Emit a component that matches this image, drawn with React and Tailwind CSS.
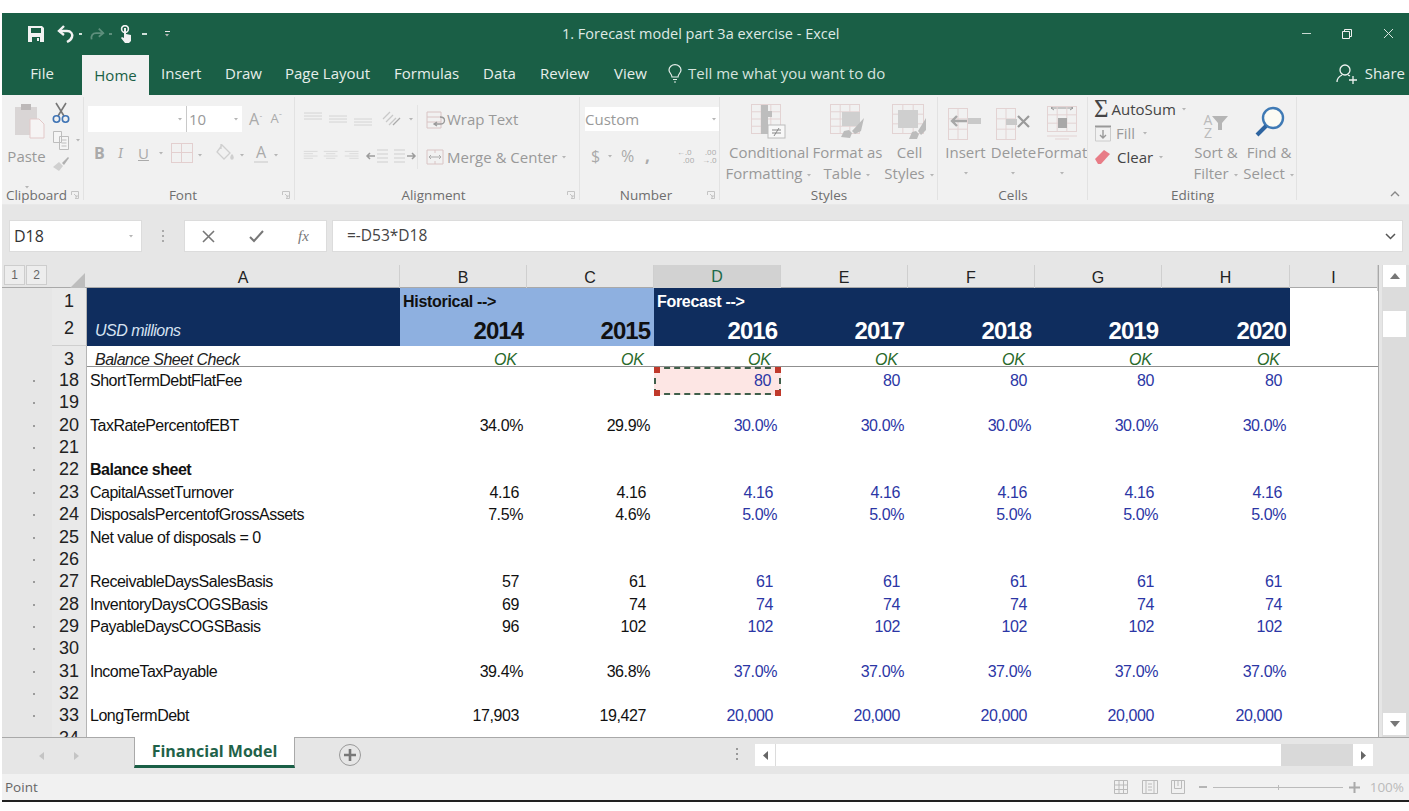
const Caret = ({ className = '' }) => (
  <svg width="6" height="4" viewBox="0 0 6 4" className={`inline-block ${className}`}><path d="M1 1h4L3 3.5z" fill="#b5b5b5" /></svg>
);

const Launcher = () => (
  <svg width="8" height="8" viewBox="0 0 8 8" fill="none" stroke="#c4c4c4"><path d="M.5 4V.5H7.5V7.5H4M3 3l3 3M6 4v2H4" /></svg>
);

const Save = () => (
  <svg width="20" height="20" viewBox="0 0 20 20"><path fill="#f2f2f2" d="M2 2h14l2 2v14H2z" /><path fill="#1a5f46" d="M5 4h10v5H5zM6 13h8v5H6z" /><path fill="#f2f2f2" d="M11 14h2v3h-2z" /></svg>
);

const Undo = () => (
  <svg width="20" height="20" viewBox="0 0 20 20" fill="none" stroke="#f2f2f2" strokeWidth="2.4"><path d="M8 2 3 7l5 4" /><path d="M3 7h8c4 0 6 3 5 6s-3 4-5 5" /></svg>
);

const Redo = () => (
  <svg width="18" height="18" viewBox="0 0 20 20" fill="none" stroke="#5d8f7c" strokeWidth="2"><path d="m12 4 5 5-5 4" /><path d="M17 9H9c-4 0-6 3-5 7" /></svg>
);

const Touch = () => (
  <svg width="14" height="18" viewBox="0 0 14 18"><circle cx="6" cy="4" r="3.4" fill="none" stroke="#f2f2f2" strokeWidth="1.6" /><path fill="#f2f2f2" d="M5 3h2v6l5 1v6l-2 2H6l-4-5 1-1 2 1z" /></svg>
);

const Paste = () => (
  <svg width="34" height="36" viewBox="0 0 34 36"><path fill="#d9d5d5" d="M1 4h22v28H1z" /><path fill="#bdb9b9" d="M7 1h10v6H7z" /><path fill="#f6f4f4" stroke="#e3c9c9" d="M16 16h9l5 5v14H16z" /></svg>
);

const Scissors = () => (
  <svg width="18" height="22" viewBox="0 0 18 22" fill="none"><path stroke="#777" strokeWidth="1.6" d="m4 1 8 13M14 1 6 14" /><circle cx="4.5" cy="17" r="3.2" stroke="#3f74b5" strokeWidth="1.6" /><circle cx="13.5" cy="17" r="3.2" stroke="#3f74b5" strokeWidth="1.6" /></svg>
);

const Copy = () => (
  <svg width="18" height="20" viewBox="0 0 18 20" fill="none" stroke="#bdbdbd"><path d="M1.5 1.5h8v11h-8zM7.5 6.5h9v13h-9z" fill="#f5f5f5" /><path d="M9.5 10h5M9.5 13h5M9.5 16h5" /></svg>
);

const Brush = () => (
  <svg width="18" height="16" viewBox="0 0 18 16"><path fill="#d0d0d0" d="M1 11 7 6l4 4-4 5z" /><path fill="#b0b0b0" d="m10 7 6-6 1 1-5 7z" /></svg>
);

const FontColorBar = ({ w = 14 }) => <span className="block h-[2px] bg-[#dcdcdc]" style={{ width: w }} />;

const AlignIcon = ({ mode, top }) => {
  const offs = mode === 'v' ? [top, top + 3, top + 6] : [1, 4, 7, 10];
  return (
    <svg width="20" height="14" viewBox="0 0 20 14" stroke="#d4d4d4" fill="none">
      {offs.map((o, i) => (
        <path key={i} d={mode === 'l' ? `M1 ${o}h${i % 2 ? 12 : 18}` : mode === 'r' ? `M${i % 2 ? 7 : 1} ${o}H19` : mode === 'c' ? `M${i % 2 ? 4 : 1} ${o}H${i % 2 ? 16 : 19}` : `M1 ${o}h18`} />
      ))}
    </svg>
  );
};

const Indent = ({ flip }) => (
  <svg width="24" height="14" viewBox="0 0 24 14" fill="none" stroke="#cfcfcf" style={flip ? { transform: 'scaleX(-1)' } : undefined}>
    <path d="M12 1h11M12 5h11M12 9h11M12 13h11" />
    <path stroke="#9c9c9c" strokeWidth="1.5" d="M10 7H2m3-3L2 7l3 3" />
  </svg>
);

const Orient = () => (
  <svg width="22" height="18" viewBox="0 0 22 18" fill="none" stroke="#c9c9c9" strokeWidth="1.3"><path d="m2 9 7-7M5 12l7-7M8 15l7-7" /><path d="M12 15 19 8" stroke="#aaa" /></svg>
);

const WrapIcon = () => (
  <svg width="22" height="18" viewBox="0 0 22 18" fill="none" stroke="#d9c4c4"><path d="M1 1h14v16H1zM1 6h14M1 11h14" /><path stroke="#999" strokeWidth="1.3" d="M8 13h6c6 0 6-7 0-7m-3 5-3 2 3 2" /></svg>
);

const MergeIcon = () => (
  <svg width="18" height="16" viewBox="0 0 18 16" fill="none" stroke="#d9c4c4"><path d="M1 1h16v14H1zM9 1v3M9 12v3" /><path stroke="#aaa" d="M3 8h12M5 6 3 8l2 2M13 6l2 2-2 2" /></svg>
);

const SheetGrid = ({ w, h, cols, rows, className = '' }) => {
  const items = [];
  for (let i = 0; i <= cols; i++) items.push(<path key={`c${i}`} d={`M${0.5 + (i * (w - 1)) / cols} 0V${h}`} />);
  for (let i = 0; i <= rows; i++) items.push(<path key={`r${i}`} d={`M0 ${0.5 + (i * (h - 1)) / rows}H${w}`} />);
  return <g stroke="#e3d3d3" fill="none" className={className}>{items}</g>;
};

const CondFormat = () => (
  <svg width="36" height="36" viewBox="0 0 36 36"><SheetGrid w={30} h={30} cols={3} rows={4} /><path fill="#bdbdbd" d="M10 1h7v6h4v6h-4v6h-7z" /><path fill="#bdbdbd" d="M10 19h7v11h-7z" /><rect x="17" y="21" width="17" height="13" fill="#f8f8f8" stroke="#bcbcbc" /><path stroke="#888" d="M21 26h9M21 29h9M28 24l-5 8" /></svg>
);

const FormatTable = () => (
  <svg width="36" height="36" viewBox="0 0 36 36"><SheetGrid w={30} h={30} cols={3} rows={4} /><path fill="#cfcfcf" d="M12 8h18v14H12z" /><path fill="#bcbcbc" d="m11 33 3-6 5-1 3 3-2 5zM22 27 34 14l-3 13-6 3z" /></svg>
);

const CellStyles = () => (
  <svg width="36" height="36" viewBox="0 0 36 36"><SheetGrid w={32} h={30} cols={3} rows={3} /><path fill="#cfcfcf" d="M6 6h20v18H6z" /><path fill="#bcbcbc" d="m17 35 3-7 4-1 3 3-2 5zM26 27 34 14v12l-5 5z" /></svg>
);

const CellsIcon = ({ kind }) => {
  if (kind === 'format') {
    return (
      <svg width="30" height="34" viewBox="0 0 30 34" fill="none"><path stroke="#999" d="M4 2h22M4 2l3-2M4 2l3 2M26 2l-3-2M26 2l-3 2" /><SheetGrid w={30} h={26} cols={3} rows={3} /><path fill="#a8a8a8" d="M11 12h9v10h-9z" /><path stroke="#e3d3d3" d="M0 30h30M8 33h14" /></svg>
    );
  }
  return (
    <svg width="36" height="32" viewBox="0 0 36 32" fill="none">
      <SheetGrid w={20} h={32} cols={2} rows={3} />
      {kind === 'insert' ? (
        <><path stroke="#a8a8a8" strokeWidth="2.4" d="M19 13H4m5-5-5 5 5 5" /><path fill="#c9c9c9" d="M20 10h13v6H20z" /></>
      ) : (
        <><path fill="#c9c9c9" d="M10 11h11v6H10z" /><path stroke="#9a9a9a" strokeWidth="2.2" d="m22 8 11 11m0-11L22 19" /></>
      )}
    </svg>
  );
};

const RibbonText = ({ className = '', children }) => <span className={`text-[15px] leading-[21px] whitespace-nowrap text-[#999] ${className}`}>{children}</span>;

const GroupLabel = ({ children, launcher, className = '' }) => (
  <div className={`h-[18px] flex items-center text-[13.5px] text-[#6e6e6e] ${className}`}>
    <span className="flex-1 text-center whitespace-nowrap">{children}</span>
    {launcher && <span className="mr-[5px] flex"><Launcher /></span>}
  </div>
);

const Group = ({ w, label, launcher, labelClass, children }) => (
  <div className="flex flex-col relative" style={{ width: w }}>
    <div className="h-[91px]">{children}</div>
    <GroupLabel launcher={launcher} className={labelClass}>{label}</GroupLabel>
    <span className="absolute right-0 top-[2px] bottom-[4px] w-px bg-[#e2e2e2]" />
  </div>
);

const BigButton = ({ w, icon, lines, caretOnly }) => (
  <div className="flex flex-col items-center" style={{ width: w }}>
    <div className="h-[46px] flex items-end pb-[1px]">{icon}</div>
    <div className="mt-[1px] flex flex-col items-center">
      {lines.map((l, i) => <RibbonText key={i}>{l}</RibbonText>)}
      {caretOnly && <Caret className="mt-[8px]" />}
    </div>
  </div>
);

const TitleBar = () => (
  <div className="h-[41px] flex items-center bg-[#1a5f46] text-[#dfe9e5]">
    <div className="flex items-center w-[200px] pl-[24px]">
      <Save />
      <span className="ml-[10px] flex"><Undo /></span>
      <span className="ml-[3px] w-[3px] h-[2px] bg-[#cfe0d9]" />
      <span className="ml-[6px] flex"><Redo /></span>
      <span className="ml-[3px] w-[3px] h-[2px] bg-[#5d8f7c]" />
      <span className="ml-[7px] flex"><Touch /></span>
      <span className="ml-[9px] w-[5px] h-[2px] bg-[#cfe0d9]" />
      <span className="ml-[17px] flex flex-col items-center gap-[1px]"><span className="w-[5px] h-px bg-[#e8e8e8]" /><Caret /></span>
    </div>
    <div className="ml-[360px] text-[14.5px] whitespace-nowrap">1. Forecast model part 3a exercise - Excel</div>
    <div className="ml-auto flex items-center pr-[15px] gap-[31px]">
      <span className="w-[9px] h-px bg-[#c9d9d2]" />
      <svg width="10" height="10" viewBox="0 0 10 10" fill="none" stroke="#f0f0f0"><path d="M.5 2.5h7v7h-7zM2.5 2.5v-2h7v7h-2" /></svg>
      <svg width="11" height="11" viewBox="0 0 11 11" stroke="#d8e4df"><path d="m1 1 9 9m0-9-9 9" /></svg>
    </div>
  </div>
);

const tabs = [['Insert', 161, 200], ['Draw', 226, 261], ['Page Layout', 287, 371], ['Formulas', 396, 460], ['Data', 485, 517], ['Review', 542, 591], ['View', 616, 649]];

const TabRow = () => (
  <div className="h-[41px] flex bg-[#1a5f46] text-[15px] text-[#e6eeea]">
    <div className="w-[80px] flex items-center justify-center pb-[2px]">File</div>
    <div className="w-[67px] mt-[1px] bg-[#f1f1f1] text-[#1a5f46] flex items-center justify-center">Home</div>
    <div className="ml-[12px] flex items-center gap-[25px] pb-[2px]">
      {tabs.map(([t, a, b]) => <span key={t} className="whitespace-nowrap text-center" style={{ width: b - a }}>{t}</span>)}
    </div>
    <div className="ml-[21px] flex items-center pb-[2px]">
      <svg width="14" height="19" viewBox="0 0 14 19" fill="none" stroke="#e6eeea" strokeWidth="1.2"><path d="M4 13c0-3-3-4-3-7a6 5.4 0 0 1 12 0c0 3-3 4-3 7zM5 15.500h4M6 18h2" /></svg>
      <span className="ml-[6px] whitespace-nowrap text-[#d6e3de]">Tell me what you want to do</span>
    </div>
    <div className="ml-auto flex items-center pb-[2px] pr-[4px]">
      <svg width="22" height="21" viewBox="0 0 22 21" fill="none" stroke="#eef3f1" strokeWidth="1.3"><circle cx="9" cy="7" r="5" /><path d="M1 19c0-4 3-6 5-7M12 12l2 1M13 17h8M17 13v8" /></svg>
      <span className="ml-[7px]">Share</span>
    </div>
  </div>
);

const Ribbon = () => (
  <div className="h-[109px] flex bg-[#f1f1f1]">
    <Group w={82} label="Clipboard" launcher>
      <div className="flex h-full">
        <div className="w-[50px] flex flex-col items-center pt-[8px]">
          <span className="ml-[7px] flex"><Paste /></span>
          <RibbonText className="mt-[7px] mr-[1px]">Paste</RibbonText>
          <span className="mt-[6px]"><Caret /></span>
        </div>
        <div className="flex flex-col items-start pt-[7px] gap-[6px]">
          <Scissors />
          <span className="flex items-center gap-[5px]"><Copy /><Caret /></span>
          <Brush />
        </div>
      </div>
    </Group>
    <Group w={211} label="Font" launcher>
      <div className="pl-[4px] pt-[11px]">
        <div className="flex items-center">
          <div className="w-[98px] h-[26px] bg-white flex items-center justify-end pr-[3px]"><Caret /></div>
          <div className="w-[56px] h-[26px] bg-white border-l border-[#c9c9c9] flex items-center pl-[2px] justify-between pr-[3px]"><RibbonText>10</RibbonText><Caret /></div>
          <span className="ml-[7px] text-[16px] text-[#aaa]">A<sup className="text-[8px]">ˆ</sup></span>
          <span className="ml-[8px] text-[13px] text-[#aaa]">A<sup className="text-[8px]">ˇ</sup></span>
        </div>
        <div className="flex items-center mt-[8px] pl-[6px] h-[26px] text-[#aaa]">
          <b className="text-[16px] w-[24px]">B</b>
          <i className="text-[15px] font-serif w-[20px]">I</i>
          <span className="text-[15px] underline w-[20px]">U</span>
          <Caret />
          <span className="ml-[7px] w-[22px] h-[20px] grid grid-cols-2 grid-rows-2 border border-[#e3cfcf]">
            <span className="border-r border-b border-[#e3cfcf]" /><span className="border-b border-[#e3cfcf]" /><span className="border-r border-[#e3cfcf]" /><span />
          </span>
          <span className="ml-[4px]"><Caret /></span>
          <svg className="ml-[10px]" width="22" height="20" viewBox="0 0 22 20" fill="none" stroke="#cfcfcf" strokeWidth="1.3"><path d="m9 2 8 8-6 6-7-7zM8 1v5" /><path d="M19 12c1.500 2 1.500 4 0 4s-1.500-2 0-4z" fill="#cfcfcf" /></svg>
          <span className="ml-[4px]"><Caret /></span>
          <span className="ml-[9px] text-[16px] flex flex-col items-center leading-[17px]">A<FontColorBar /></span>
          <span className="ml-[5px]"><Caret /></span>
        </div>
      </div>
    </Group>
    <Group w={285} label="Alignment" launcher labelClass="pl-[5px]">
      <div className="flex pt-[11px] h-full">
        <div className="w-[122px] pl-[8px]">
          <div className="flex items-center gap-[5px] h-[26px]">
            <AlignIcon mode="v" top={1} /><AlignIcon mode="v" top={4} /><AlignIcon mode="v" top={7} />
            <span className="ml-[3px] flex"><Orient /></span>
            <Caret />
          </div>
          <div className="flex items-center gap-[5px] h-[26px] mt-[11px]">
            <AlignIcon mode="l" /><AlignIcon mode="c" /><AlignIcon mode="r" />
            <span className="flex gap-[4px] ml-[1px]"><Indent /><Indent flip /></span>
          </div>
        </div>
        <div className="border-l border-[#e4e4e4] h-[64px] pl-[8px] -mt-[1px]">
          <div className="flex items-center h-[27px] mt-[1px]">
            <WrapIcon />
            <RibbonText className="-ml-[1px]">Wrap Text</RibbonText>
          </div>
          <div className="flex items-center h-[26px] mt-[11px]">
            <MergeIcon />
            <RibbonText className="ml-[3px]">Merge &amp; Center</RibbonText>
            <Caret className="ml-[4px]" />
          </div>
        </div>
      </div>
    </Group>
    <Group w={140} label="Number" launcher labelClass="pl-[5px]">
      <div className="pl-[5px] pt-[12px]">
        <div className="w-[134px] h-[24px] bg-white flex items-center justify-between pr-[2px]"><RibbonText>Custom</RibbonText><Caret /></div>
        <div className="flex items-center h-[26px] mt-[12px] text-[#aaa] pl-[6px]">
          <span className="text-[16px] w-[16px]">$</span>
          <Caret />
          <span className="ml-[8px] text-[16px] w-[24px]">%</span>
          <b className="text-[17px] w-[32px]">,</b>
          <span className="flex flex-col text-[8px] leading-[8px] w-[25px]"><span>←.0</span><span className="pl-[6px]">.00</span></span>
          <span className="flex flex-col text-[8px] leading-[8px]"><span className="pl-[3px]">.00</span><span>→.0</span></span>
        </div>
      </div>
    </Group>
    <Group w={218} label="Styles">
      <div className="flex pl-[4px]">
        <BigButton w={90} icon={<CondFormat />} lines={['Conditional', <>Formatting <Caret /></>]} />
        <BigButton w={67} icon={<FormatTable />} lines={['Format as', <>Table <Caret /></>]} />
        <BigButton w={57} icon={<CellStyles />} lines={['Cell', <>Styles <Caret /></>]} />
      </div>
    </Group>
    <Group w={150} label="Cells">
      <div className="flex pl-[3px]">
        <BigButton w={49} icon={<CellsIcon kind="insert" />} lines={['Insert']} caretOnly />
        <BigButton w={47} icon={<CellsIcon kind="delete" />} lines={['Delete']} caretOnly />
        <BigButton w={50} icon={<CellsIcon kind="format" />} lines={['Format']} caretOnly />
      </div>
    </Group>
    <Group w={209} label="Editing">
      <div className="flex">
        <div className="w-[100px] pl-[6px] pt-[2px] flex flex-col">
          <div className="flex items-center h-[24px]">
            <span className="text-[25px] leading-[24px] text-[#444] font-['Liberation_Serif',serif]">Σ</span>
            <span className="ml-[3px] text-[15px] text-[#444]">AutoSum</span>
            <Caret className="ml-[5px]" />
          </div>
          <div className="flex items-center h-[24px]">
            <svg width="18" height="17" viewBox="0 0 18 17" fill="none" stroke="#999"><path d="M1 1.500h16" strokeWidth="2" /><path stroke="#ccc" d="M1.500 3v13h15V3" /><path d="M9 5v8M6 10l3 3 3-3" strokeWidth="1.4" /></svg>
            <RibbonText className="ml-[4px]">Fill</RibbonText>
            <Caret className="ml-[7px]" />
          </div>
          <div className="flex items-center h-[24px]">
            <svg width="18" height="16" viewBox="0 0 18 16"><path fill="#e87c86" d="m1 10 9-9 6 4-9 10H4z" /></svg>
            <span className="ml-[5px] text-[15px] text-[#444]">Clear</span>
            <Caret className="ml-[5px]" />
          </div>
        </div>
        <div className="flex">
          <div className="w-[56px] flex flex-col items-center">
            <div className="h-[46px] flex items-end pb-[2px] text-[#bbb]">
              <span className="flex flex-col text-[14px] leading-[13px] items-center"><span>A</span><span>Z</span></span>
              <svg className="mb-[8px]" width="16" height="16" viewBox="0 0 16 16"><path fill="#b5b5b5" d="M0 1h16l-6 7v7H6V8z" /></svg>
            </div>
            <div className="mt-[1px] flex flex-col items-center">
              <RibbonText>Sort &amp; </RibbonText>
              <RibbonText>Filter <Caret /></RibbonText>
            </div>
          </div>
          <div className="w-[50px] flex flex-col items-center">
            <div className="h-[46px] flex items-end pb-[3px]">
              <svg width="31" height="32" viewBox="0 0 31 32" fill="none"><circle cx="19" cy="12" r="10" fill="#fbfbf4" stroke="#3f7ab5" strokeWidth="2.4" /><path stroke="#2d64a0" strokeWidth="4" d="M12 20 3 29" /></svg>
            </div>
            <div className="mt-[1px] flex flex-col items-center">
              <RibbonText className="text-[#444]">Find &amp;</RibbonText>
              <RibbonText className="text-[#444]">Select <Caret /></RibbonText>
            </div>
          </div>
        </div>
      </div>
    </Group>
    <div className="flex-1 flex justify-end items-end pr-[9px] pb-[7px]">
      <svg width="10" height="6" viewBox="0 0 10 6" fill="none" stroke="#888" strokeWidth="1.4"><path d="m1 5 4-4 4 4" /></svg>
    </div>
  </div>
);

const FormulaBar = () => (
  <div className="h-[61px] bg-[#e6e6e6] flex items-start pt-[15px] border-t-[1px] border-[#e9e9e9]">
    <div className="ml-[7px] w-[133px] h-[32px] bg-white border border-[#dcdcdc] flex items-center justify-between pl-[4px] pr-[7px] text-[16px] text-[#333]">D18<Caret /></div>
    <div className="w-[42px] h-[32px] flex flex-col items-center justify-center gap-[3px]">
      <span className="w-[2px] h-[2px] bg-[#aaa]" /><span className="w-[2px] h-[2px] bg-[#aaa]" /><span className="w-[2px] h-[2px] bg-[#aaa]" />
    </div>
    <div className="w-[143px] h-[32px] bg-white border border-[#dcdcdc] flex items-center pl-[17px]">
      <svg width="13" height="13" viewBox="0 0 13 13" stroke="#777" strokeWidth="1.6"><path d="m1 1 11 11m0-11L1 12" /></svg>
      <svg className="ml-[34px]" width="15" height="13" viewBox="0 0 15 13" fill="none" stroke="#777" strokeWidth="2"><path d="m1 7 4 4 9-10" /></svg>
      <span className="ml-[34px] font-['Liberation_Serif',serif] italic text-[15px] text-[#777]">fx</span>
    </div>
    <div className="ml-[5px] w-[1071px] h-[32px] bg-white border border-[#dcdcdc] flex items-center pl-[14px] pr-[6px] justify-between text-[15.5px] text-[#444]">
      =-D53*D18
      <svg width="11" height="7" viewBox="0 0 11 7" fill="none" stroke="#555" strokeWidth="1.5"><path d="m1 1 4.500 4.500L10 1" /></svg>
    </div>
  </div>
);

const colWidths = 'grid-cols-[50px_35px_313px_127px_127px_127px_127px_127px_127px_128px_88px]';
const letters = ['A', 'B', 'C', 'D', 'E', 'F', 'G', 'H', 'I'];

const ColumnHeader = () => (
  <div className={`grid ${colWidths} h-[23px] bg-[#e6e6e6] border-b border-[#a9a9a9] font-['Liberation_Sans',sans-serif] text-[16px]`}>
    <div className="flex gap-px pl-[2px]">
      <span className="w-[21px] h-[20px] border border-[#cdcdcd] bg-[#ededed] flex items-center justify-center text-[12px] text-[#666]">1</span>
      <span className="w-[21px] h-[20px] border border-[#cdcdcd] bg-[#ededed] flex items-center justify-center text-[12px] text-[#666]">2</span>
    </div>
    <div className="flex items-end justify-end pr-[2px] pb-[3px]">
      <svg width="15" height="15" viewBox="0 0 15 15"><path fill="#bdbdbd" d="M15 0v15H0z" /></svg>
    </div>
    {letters.map(l => (
      <div key={l} className={`flex items-center justify-center border-r border-[#cfcfcf] ${l === 'D' ? 'bg-[#d2d2d2] text-[#1d6a4a] border-b-2 border-b-[#1a5f46]' : 'text-[#222]'}`}>{l}</div>
    ))}
  </div>
);

const RowHead = ({ n }) => (
  <div className="h-full bg-[#e9e9e9] border-b border-[#cfcfcf] border-r border-r-[#b5b5b5] flex items-center justify-center text-[18px] text-[#222]">{n}</div>
);

const TopRows = () => (
  <div className="font-['Liberation_Sans',sans-serif]">
    <div className={`grid ${colWidths} h-[23px]`}>
      <div className="bg-[#e6e6e6]" />
      <RowHead n={1} />
      <div className="bg-[#0f2d5e]" />
      <div className="col-span-2 bg-[#8eb0e0] pl-[3px] font-bold text-[16px] tracking-[-0.3px] text-[#111] flex items-center">Historical --&gt;</div>
      <div className="col-span-5 bg-[#0f2d5e] pl-[3px] font-bold text-[16px] tracking-[-0.3px] text-white flex items-center">Forecast --&gt;</div>
      <div />
    </div>
    <div className={`grid ${colWidths} h-[35px]`}>
      <div className="bg-[#e6e6e6]" />
      <RowHead n={2} />
      <div className="bg-[#0f2d5e] pl-[8px] pb-[3px] text-[16px] tracking-[-0.5px] italic text-[#d6e2f2] flex items-end">USD millions</div>
      {['2014', '2015', '2016', '2017', '2018', '2019', '2020'].map((y, i) => (
        <div key={y} className={`${i < 2 ? 'bg-[#8eb0e0] text-[#111]' : 'bg-[#0f2d5e] text-white'} pr-[4px] pb-[1px] font-bold text-[24px] leading-[28px] tracking-[-1px] flex items-end justify-end`}>{y}</div>
      ))}
      <div />
    </div>
    <div className={`grid ${colWidths} h-[21px] border-b border-[#8f8f8f]`}>
      <div className="bg-[#e6e6e6]" />
      <RowHead n={3} />
      <div className="pl-[8px] text-[16px] tracking-[-0.5px] italic text-[#222] flex items-center">Balance Sheet Check</div>
      {[0, 1, 2, 3, 4, 5, 6].map(i => (
        <div key={i} className="pr-[10px] text-[16px] italic text-[#2a6a2a] flex items-center justify-end">OK</div>
      ))}
      <div />
    </div>
  </div>
);

const rows = [
  { n: 18, a: 'ShortTermDebtFlatFee', v: ['', '', '80', '80', '80', '80', '80'] },
  { n: 19 },
  { n: 20, a: 'TaxRatePercentofEBT', v: ['34.0%', '29.9%', '30.0%', '30.0%', '30.0%', '30.0%', '30.0%'] },
  { n: 21 },
  { n: 22, a: 'Balance sheet', bold: true },
  { n: 23, a: 'CapitalAssetTurnover', v: ['4.16', '4.16', '4.16', '4.16', '4.16', '4.16', '4.16'] },
  { n: 24, a: 'DisposalsPercentofGrossAssets', v: ['7.5%', '4.6%', '5.0%', '5.0%', '5.0%', '5.0%', '5.0%'] },
  { n: 25, a: 'Net value of disposals = 0' },
  { n: 26 },
  { n: 27, a: 'ReceivableDaysSalesBasis', v: ['57', '61', '61', '61', '61', '61', '61'] },
  { n: 28, a: 'InventoryDaysCOGSBasis', v: ['69', '74', '74', '74', '74', '74', '74'] },
  { n: 29, a: 'PayableDaysCOGSBasis', v: ['96', '102', '102', '102', '102', '102', '102'] },
  { n: 30 },
  { n: 31, a: 'IncomeTaxPayable', v: ['39.4%', '36.8%', '37.0%', '37.0%', '37.0%', '37.0%', '37.0%'] },
  { n: 32 },
  { n: 33, a: 'LongTermDebt', v: ['17,903', '19,427', '20,000', '20,000', '20,000', '20,000', '20,000'] },
  { n: 34 },
];

const Handle = ({ className }) => <span className={`absolute w-[6px] h-[6px] bg-[#c0392b] ${className}`} />;

const DataRow = ({ row }) => (
  <div className={`grid ${colWidths} h-[22.36px]`}>
    <div className="bg-[#e6e6e6] relative flex items-center">
      <span className="ml-[31px] w-[2px] h-[2px] bg-[#9b9b9b]" />
    </div>
    <RowHead n={row.n} />
    <div className={`pl-[3px] text-[16px] tracking-[-0.5px] text-[#111] flex items-center whitespace-nowrap ${row.bold ? 'font-bold' : ''}`}>{row.a}</div>
    {letters.slice(1, 8).map((l, i) => {
      const val = row.v ? row.v[i] : '';
      const pct = val.endsWith('%');
      const sel = row.n === 18 && l === 'D';
      return (
        <div key={l} className={`relative flex items-center justify-end text-[16px] tracking-[-0.4px] ${pct ? 'pr-[4px]' : 'pr-[8px]'} ${i < 2 ? 'text-[#111]' : 'text-[#2b36a5]'} ${sel ? 'bg-[#fde6e4] border-2 border-dashed border-[#3f5f4a]' : ''}`}>
          {val}
          {sel && <><Handle className="-top-[2px] -left-[2px]" /><Handle className="-top-[2px] -right-[2px]" /><Handle className="-bottom-[3px] -left-[2px]" /><Handle className="-bottom-[3px] -right-[2px]" /></>}
        </div>
      );
    })}
    <div />
  </div>
);

const Sheet = () => (
  <div className="flex">
    <div className="w-[1377px] border-r border-[#a9a9a9]">
      <ColumnHeader />
      <div className="h-[449px] overflow-hidden">
        <TopRows />
        <div className="relative font-['Liberation_Sans',sans-serif]">
          <span className="absolute left-[10px] top-0 bottom-0 w-[2px] bg-[#8a8a8a]" />
          {rows.map(r => <DataRow key={r.n} row={r} />)}
        </div>
      </div>
    </div>
    <div className="flex-1 bg-[#dcdcdc] border-l-[3px] border-[#e6e6e6] pr-[3px] pl-[1px] flex flex-col">
      <div className="h-[22px] bg-white flex items-center justify-center">
        <svg width="10" height="6" viewBox="0 0 10 6"><path fill="#777" d="M5 0l5 6H0z" /></svg>
      </div>
      <div className="h-[26px] mt-[24px] bg-white" />
      <div className="flex-1" />
      <div className="h-[22px] mb-[2px] bg-white flex items-center justify-center">
        <svg width="10" height="6" viewBox="0 0 10 6"><path fill="#777" d="M5 6 10 0H0z" /></svg>
      </div>
    </div>
  </div>
);

const SheetTabs = () => (
  <div className="h-[37px] bg-[#e6e6e6] border-t border-[#a9a9a9] flex items-start">
    <div className="w-[132px] h-full flex items-center pl-[37px] gap-[30px]">
      <svg width="5" height="8" viewBox="0 0 5 8"><path fill="#c4c4c4" d="M5 0v8L0 4z" /></svg>
      <svg width="5" height="8" viewBox="0 0 5 8"><path fill="#c4c4c4" d="M0 0v8l5-4z" /></svg>
    </div>
    <div className="w-[161px] h-[31px] -mt-px bg-white border-l border-r border-[#a9a9a9] border-b-[3px] border-b-[#1a5f46] flex items-center justify-center font-['Open_Sans',sans-serif] font-bold text-[16px] text-[#1f6249]">Financial Model</div>
    <div className="ml-[44px] mt-[6px] w-[22px] h-[22px] rounded-full border border-[#999] flex items-center justify-center">
      <svg width="12" height="12" viewBox="0 0 12 12" fill="none" stroke="#777" strokeWidth="2.6"><path d="M6 0v12M0 6h12" /></svg>
    </div>
    <div className="ml-[375px] mt-[10px] flex flex-col gap-[3px]">
      <span className="w-[2px] h-[2px] bg-[#999]" /><span className="w-[2px] h-[2px] bg-[#999]" /><span className="w-[2px] h-[2px] bg-[#999]" />
    </div>
    <div className="ml-[17px] mt-[6px] flex h-[22px]">
      <div className="w-[21px] bg-white flex items-center justify-center border-r border-[#dcdcdc]">
        <svg width="5" height="9" viewBox="0 0 5 9"><path fill="#666" d="M5 0v9L0 4.500z" /></svg>
      </div>
      <div className="w-[505px] bg-white" />
      <div className="w-[72px] bg-[#d9d9d9]" />
      <div className="w-[20px] bg-white flex items-center justify-center">
        <svg width="5" height="9" viewBox="0 0 5 9"><path fill="#666" d="M0 0v9l5-4.500z" /></svg>
      </div>
    </div>
  </div>
);

const StatusBar = () => (
  <div className="h-[28px] bg-[#f1f1f1] border-b-[2px] border-[#222] flex items-center pl-[3px] text-[13.5px] text-[#666]">
    Point
    <div className="ml-auto flex items-center pr-[5px]">
      <svg width="14" height="14" viewBox="0 0 14 14" fill="none" stroke="#bbb"><path d="M.5.5h13v13H.5zM5 .5v13M9.500.5v13M.5 5h13M.5 9.500h13" /></svg>
      <svg className="ml-[14px]" width="16" height="14" viewBox="0 0 16 14" fill="none" stroke="#bbb"><path d="M.5.5h15v13H.5zM4 .5v13M12 .5v13M6 4h4M6 7h4M6 10h4" /></svg>
      <svg className="ml-[13px]" width="14" height="14" viewBox="0 0 14 14" fill="none" stroke="#bbb"><path d="M.5.5h13v13H.5zM3.500.5v8h7v-8M7 1v5" /></svg>
      <span className="ml-[14px] w-[8px] h-[2px] bg-[#b5b5b5]" />
      <span className="ml-[6px] w-[130px] h-px bg-[#bbb] relative"><span className="absolute left-[65px] -top-[2px] w-px h-[5px] bg-[#bbb]" /></span>
      <svg className="ml-[6px]" width="11" height="11" viewBox="0 0 11 11" stroke="#aaa" strokeWidth="2"><path d="M5.500 0v11M0 5.500h11" /></svg>
      <span className="ml-[10px] text-[13.5px] text-[#bbb]">100%</span>
    </div>
  </div>
);

export default function App() {
  return (
    <div className="w-[1409px] h-[811px] bg-white pt-[13px] pl-[2px] overflow-hidden font-['Open_Sans',sans-serif]">
      <TitleBar />
      <TabRow />
      <Ribbon />
      <FormulaBar />
      <Sheet />
      <SheetTabs />
      <StatusBar />
    </div>
  );
}
